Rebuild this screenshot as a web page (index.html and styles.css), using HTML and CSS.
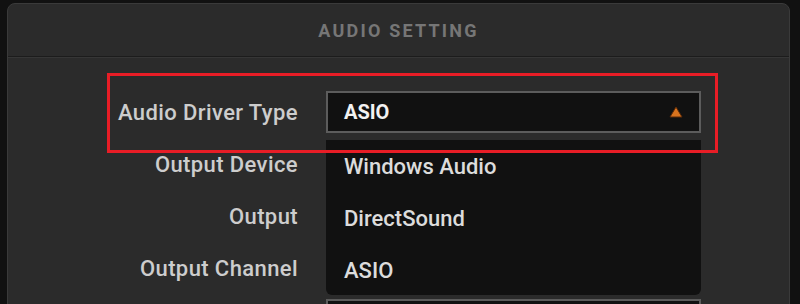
FILE: index.html
```html
<!DOCTYPE html>
<html lang="en">
<head>
  <meta charset="UTF-8" />
  <title>Audio Setting</title>
  <link rel="stylesheet" href="styles.css">
</head>
<body>
  <div class="panel">
    <div class="panel-head">AUDIO SETTING</div>

    <div class="panel-body">
      <!-- settings rows -->
      <div class="row">
        <span class="label">Audio Driver Type</span>
        <div class="select open">
          <span class="value">ASIO</span>
          <svg class="caret" width="14" height="12" viewBox="0 0 14 12">
            <polygon points="7,1 13,11 1,11" fill="#d8731e" stroke="#5a2a08" stroke-width="1" />
          </svg>
        </div>
      </div>
      <div class="row">
        <span class="label">Output Device</span>
        <div class="select"></div>
      </div>
      <div class="row">
        <span class="label">Output</span>
        <div class="select"></div>
      </div>
      <div class="row">
        <span class="label">Output Channel</span>
        <div class="select"></div>
      </div>
      <div class="row">
        <span class="label"></span>
        <div class="select"></div>
      </div>

      <!-- open dropdown menu -->
      <ul class="menu">
        <li>Windows Audio</li>
        <li>DirectSound</li>
        <li>ASIO</li>
      </ul>

      <!-- highlight frame -->
      <div class="highlight"></div>
    </div>
  </div>
</body>
</html>
```

FILE: styles.css
```css
* { box-sizing: border-box; }
body {
  margin: 0;
  padding: 0;
  background: #111;
  font-family: Roboto, "Noto Sans", sans-serif;
  overflow: hidden;
  height: 304px;
}
.panel {
  margin: 3px 0 0 7px;
  width: 783px;
  height: 400px;
  background: #2b2b2b;
  border: 1px solid #3a3a3a;
  border-radius: 8px 8px 0 0;
}
.panel-head {
  height: 53px;
  display: flex;
  align-items: center;
  justify-content: center;
  color: #767676;
  font-size: 18px;
  font-weight: 700;
  letter-spacing: 2.2px;
  border-bottom: 1px solid #1c1c1c;
  box-shadow: 0 1px 0 #363636;
}
.panel-body {
  position: relative;
  padding-top: 34px;
  display: flex;
  flex-direction: column;
  gap: 10px;
}
.row {
  display: grid;
  grid-template-columns: 290px 375px;
  column-gap: 28px;
  align-items: center;
}
.label {
  text-align: right;
  color: #cdcdcd;
  font-size: 22px;
  font-weight: 500;
  letter-spacing: 0.4px;
}
.select {
  height: 42px;
  background: #111;
  border: 2px solid #5c5c5c;
  display: flex;
  align-items: center;
  justify-content: space-between;
  padding: 0 16px 0 16px;
}
.select .value {
  color: #f2f2f2;
  font-size: 20px;
  font-weight: 700;
}
.menu {
  position: absolute;
  top: 83px;
  left: 318px;
  width: 375px;
  height: 155px;
  margin: 0;
  padding: 0;
  list-style: none;
  background: #111;
  border-radius: 0 0 6px 6px;
}
.menu li {
  height: 52px;
  display: flex;
  align-items: center;
  padding-left: 18px;
  color: #dcdcdc;
  font-size: 22px;
  font-weight: 500;
}
.highlight {
  position: absolute;
  top: 16px;
  left: 99px;
  width: 611px;
  height: 80px;
  border: 3px solid #e81d26;
  pointer-events: none;
}
```
